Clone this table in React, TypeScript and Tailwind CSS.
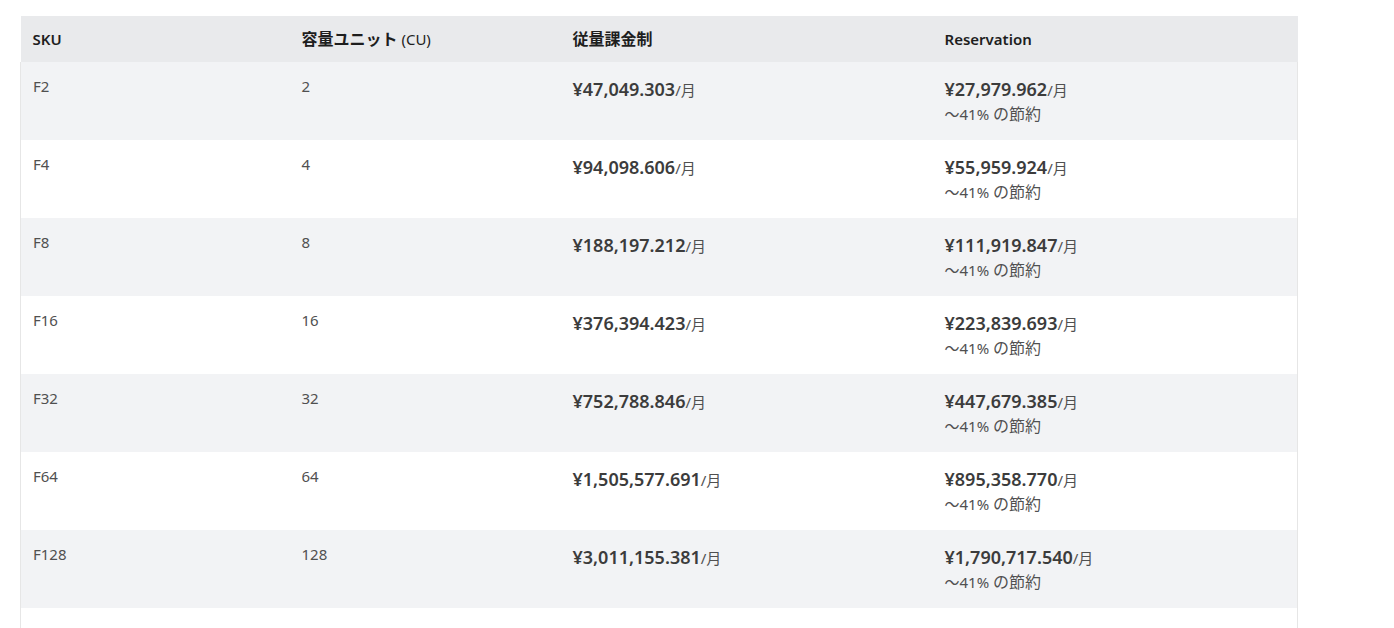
const rows = [
  { sku: "F2", cu: "2", payg: "¥47,049.303", res: "¥27,979.962" },
  { sku: "F4", cu: "4", payg: "¥94,098.606", res: "¥55,959.924" },
  { sku: "F8", cu: "8", payg: "¥188,197.212", res: "¥111,919.847" },
  { sku: "F16", cu: "16", payg: "¥376,394.423", res: "¥223,839.693" },
  { sku: "F32", cu: "32", payg: "¥752,788.846", res: "¥447,679.385" },
  { sku: "F64", cu: "64", payg: "¥1,505,577.691", res: "¥895,358.770" },
  { sku: "F128", cu: "128", payg: "¥3,011,155.381", res: "¥1,790,717.540" },
  { sku: "F256", cu: "256", payg: "¥6,022,310.762", res: "¥3,581,435.080" },
]

function Price({ value }: { value: string }) {
  return (
    <div className="leading-[24px]">
      <span className="text-[18px] font-semibold text-[#3c3c3c]">{value}</span>
      <span className="text-[15px] text-[#505050]">/月</span>
    </div>
  )
}

export default function App() {
  return (
    <div className="h-[628px] overflow-hidden bg-white pt-4 pl-5 font-['Noto_Sans','Noto_Sans_CJK_JP',sans-serif]">
      <table className="w-[1277px] table-fixed border-collapse">
        <colgroup>
          <col className="w-[269px]" />
          <col className="w-[271px]" />
          <col className="w-[372px]" />
          <col className="w-[365px]" />
        </colgroup>
        <thead>
          <tr className="h-[46px] bg-[#e9eaec] text-left text-[15px] text-[#1e1e1e]">
            <th className="px-3 font-semibold">SKU</th>
            <th className="px-3 font-semibold">
              <span className="text-[16px]">容量ユニット</span> <span className="font-normal">(CU)</span>
            </th>
            <th className="px-3 text-[16px] font-semibold">従量課金制</th>
            <th className="px-3 font-semibold">Reservation</th>
          </tr>
        </thead>
        <tbody>
          {rows.map((r, i) => (
            <tr
              key={r.sku}
              className={`h-[78px] border-x border-[#e6e6e6] align-top ${i % 2 === 0 ? "bg-[#f2f3f5]" : "bg-white"}`}
            >
              <td className="px-3 pt-[13px] text-[15px] text-[#505050]">{r.sku}</td>
              <td className="px-3 pt-[13px] text-[15px] text-[#505050]">{r.cu}</td>
              <td className="px-3 pt-[15px]">
                <Price value={r.payg} />
              </td>
              <td className="px-3 pt-[15px]">
                <Price value={r.res} />
                <div className="mt-[2px] text-[15px] leading-[20px] text-[#505050]">
                  〜41% <span className="text-[16px]">の節約</span>
                </div>
              </td>
            </tr>
          ))}
        </tbody>
      </table>
    </div>
  )
}
